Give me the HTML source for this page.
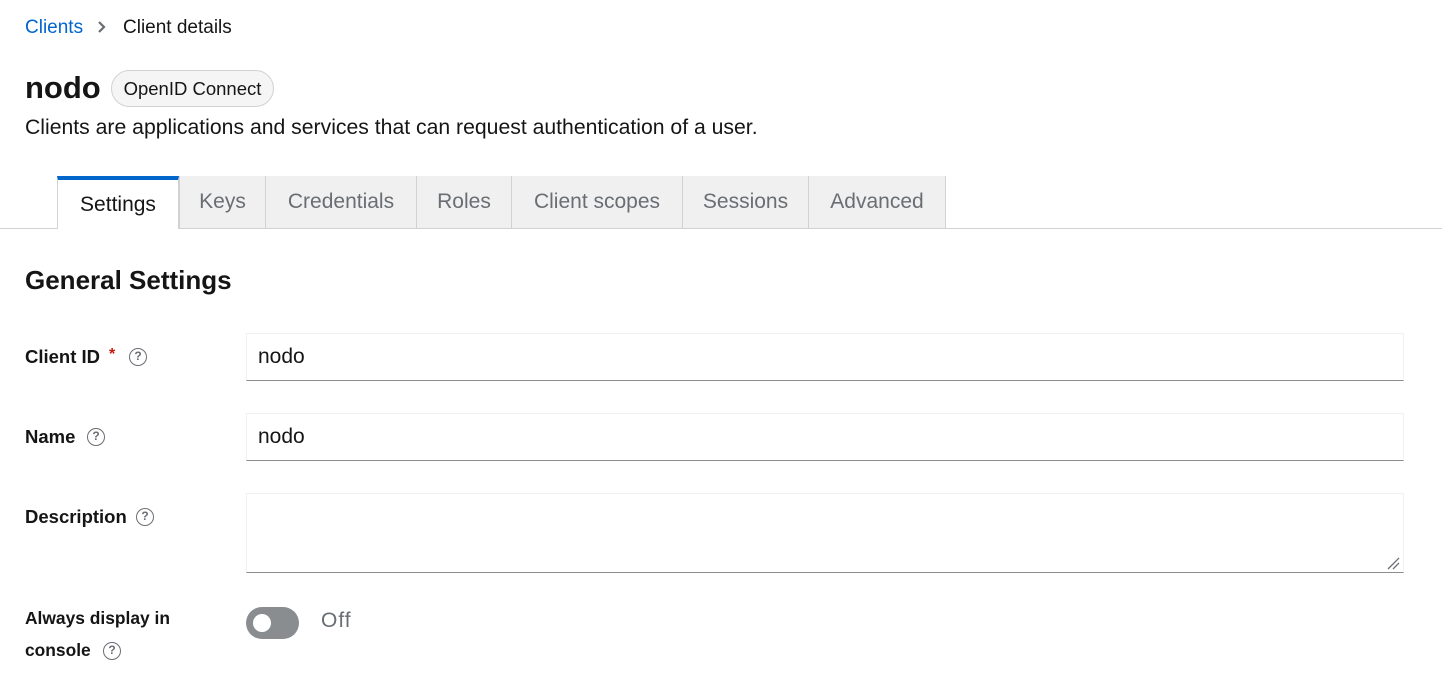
<!DOCTYPE html>
<html><head><meta charset="utf-8"><style>
*{box-sizing:border-box;margin:0;padding:0}
body{width:1442px;height:696px;background:#fff;font-family:"Liberation Sans",sans-serif;color:#151515;position:relative;overflow:hidden}
.a{position:absolute;white-space:nowrap}
.tab{position:absolute;top:176px;height:52px;background:#f0f0f0;border-left:1px solid #d2d2d2;color:#6a6e73;font-size:21px;line-height:52px;text-align:center}
.tab.act{background:#fff;color:#151515;border-top:4px solid #06c;line-height:50px;border-left:1px solid #d2d2d2;border-right:1px solid #d2d2d2;height:53px}
.inp{position:absolute;left:246px;width:1158px;border:1px solid #f0f0f0;border-bottom:1px solid #8a8d90;font-size:21px;padding-left:11px}
.lab{font-weight:bold;font-size:18px}
.q{position:absolute;width:18px;height:18px;border:1.8px solid #6a6e73;border-radius:50%;font-size:12px;font-weight:bold;color:#6a6e73;text-align:center;line-height:15px}
</style></head><body>
<div class="a" style="left:25px;top:17px;font-size:19px;color:#06c">Clients</div>
<svg class="a" style="left:97px;top:21px" width="10" height="12"><path d="M2 1L7 6L2 11" stroke="#6a6e73" stroke-width="2.2" fill="none"/></svg>
<div class="a" style="left:123px;top:17px;font-size:19px">Client details</div>
<div class="a" style="left:25px;top:70px;font-size:31px;font-weight:bold">nodo</div>
<div class="a" style="left:111px;top:70px;width:163px;height:37px;border:1px solid #d2d2d2;border-radius:19px;background:#f5f5f5;font-size:18.5px;line-height:35px;text-align:center">OpenID Connect</div>
<div class="a" style="left:25px;top:116px;font-size:21.2px">Clients are applications and services that can request authentication of a user.</div>
<div class="a" style="left:0;top:228px;width:1442px;height:1px;background:#d2d2d2"></div>
<div class="tab act" style="left:57px;width:122px">Settings</div>
<div class="tab" style="left:179px;width:86px">Keys</div>
<div class="tab" style="left:265px;width:151px">Credentials</div>
<div class="tab" style="left:416px;width:95px">Roles</div>
<div class="tab" style="left:511px;width:171px">Client scopes</div>
<div class="tab" style="left:682px;width:126px">Sessions</div>
<div class="tab" style="left:808px;width:138px;border-right:1px solid #d2d2d2">Advanced</div>
<div class="a" style="left:25px;top:265px;font-size:26px;font-weight:bold">General Settings</div>
<div class="a lab" style="left:25px;top:346px;font-size:18.5px">Client ID</div>
<div class="a" style="left:109px;top:346px;color:#c9190b;font-weight:bold;font-size:16px">*</div>
<div class="q" style="left:129px;top:348px">?</div>
<div class="inp" style="top:333px;height:48px;line-height:46px">nodo</div>
<div class="a lab" style="left:25px;top:426px;font-size:18.5px">Name</div>
<div class="q" style="left:87px;top:428px">?</div>
<div class="inp" style="top:413px;height:48px;line-height:46px">nodo</div>
<div class="a lab" style="left:25px;top:506px;font-size:18.5px">Description</div>
<div class="q" style="left:136px;top:508px">?</div>
<div class="inp" style="top:493px;height:80px"></div>
<svg class="a" style="left:1386px;top:556px" width="14" height="14"><path d="M2 13L13 2M7 13L13 7" stroke="#6a6e73" stroke-width="1.3"/></svg>
<div class="a lab" style="left:25px;top:608px;font-size:17.4px">Always display in</div>
<div class="a lab" style="left:25px;top:640px;font-size:17.4px">console</div>
<div class="q" style="left:103px;top:642px">?</div>
<div class="a" style="left:246px;top:607px;width:53px;height:32px;border-radius:16px;background:#8a8d90"></div>
<div class="a" style="left:253px;top:614px;width:18px;height:18px;border-radius:50%;background:#fff"></div>
<div class="a" style="left:321px;top:609px;font-size:21px;color:#6a6e73;letter-spacing:1px">Off</div>
</body></html>
